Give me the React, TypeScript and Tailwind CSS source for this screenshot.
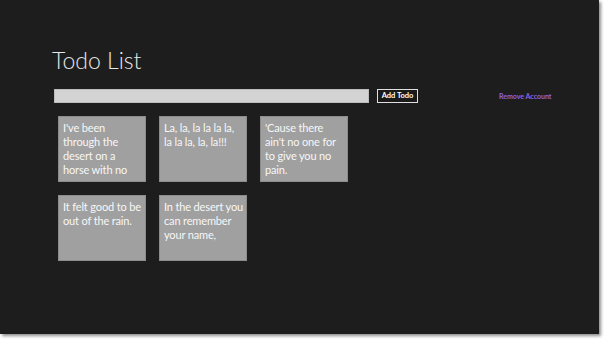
import React from "react";

const todos: string[][] = [
  ["I've been", "through the", "desert on a", "horse with no"],
  ["La, la, la la la la,", "la la la, la, la!!!"],
  ["'Cause there", "ain't no one for", "to give you no", "pain."],
  ["It felt good to be", "out of the rain."],
  ["In the desert you", "can remember", "your name,"],
];

export default function App() {
  return (
    <div className="w-[604px] h-[339px] bg-white overflow-hidden">
      <div
        className="w-[599px] h-[334px] bg-[#1d1d1d] shadow-[2px_2px_3px_rgba(0,0,0,0.45)] flex flex-col"
        style={{ fontFamily: 'Lato, "Liberation Sans", sans-serif' }}
      >
        <h1 className="ml-[52px] mt-[44px] text-[23px] leading-[32px] font-light text-[#e8e8e8]">
          Todo List
        </h1>
        <div className="ml-[54px] mt-[13px] flex items-center h-[14px]">
          <div className="w-[315px] h-[14px] bg-[#d3d3d3] border border-[#bdbdbd]" />
          <div className="ml-[8px] w-[41px] h-[14px] border border-[#e0e0e0] bg-[#1a1a1a] flex items-center justify-center text-[7.5px] font-bold text-white leading-none">
            Add Todo
          </div>
          <div className="ml-[81px] text-[7px] text-[#8f63e8] leading-none font-bold">
            Remove Account
          </div>
        </div>
        <div className="ml-[58px] mt-[13px] grid grid-cols-[repeat(3,88px)] gap-x-[13px] gap-y-[13px]">
          {todos.map((lines, i) => (
            <div
              key={i}
              className="h-[66px] bg-[#a0a0a0] border border-[#8c8c8c] overflow-hidden px-[4px] pt-[4px] text-[11px] leading-[14px] tracking-[-0.15px] text-[#f7f7f7]"
            >
              {lines.map((l, j) => (
                <div key={j} className="whitespace-nowrap">
                  {l}
                </div>
              ))}
            </div>
          ))}
        </div>
      </div>
    </div>
  );
}
